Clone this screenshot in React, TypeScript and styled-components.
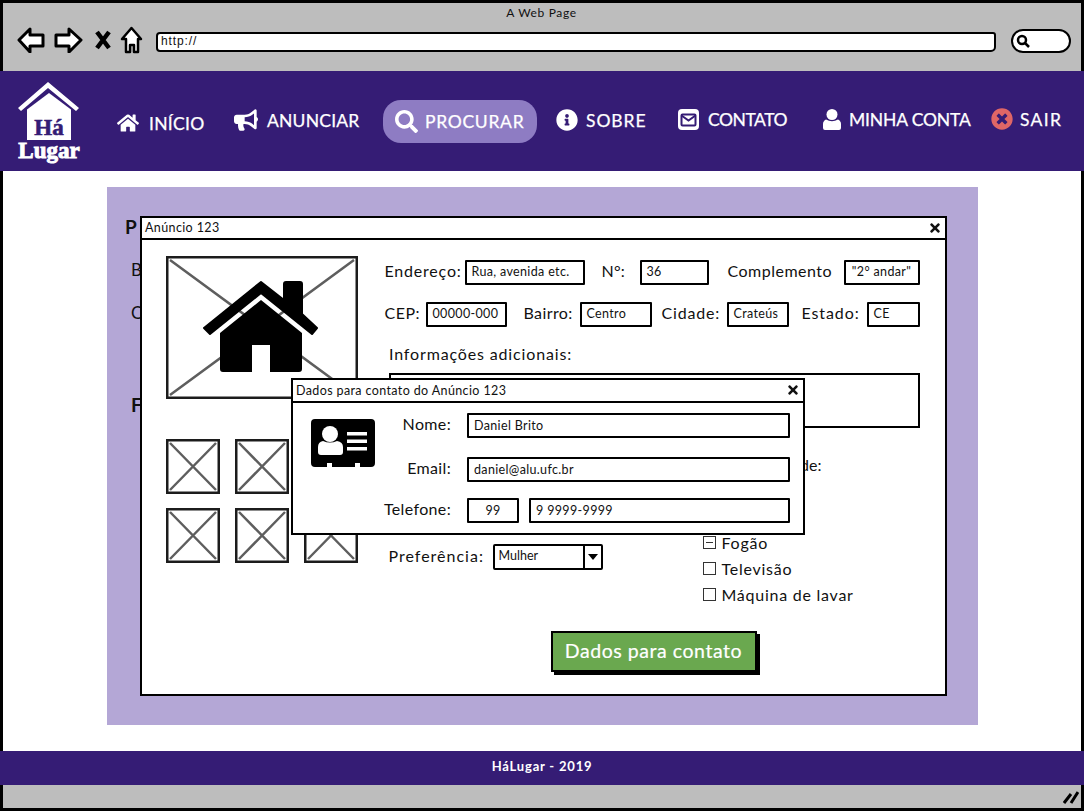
import React from "react";
import styled, { createGlobalStyle } from "styled-components";
import { FaHome, FaBullhorn, FaSearch, FaInfoCircle, FaTimesCircle, FaTimes } from "react-icons/fa";

const Global = createGlobalStyle`
  html, body { margin: 0; padding: 0; background: #fff; }
  * { box-sizing: border-box; }
  body { font-family: "Lato", "Noto Sans", sans-serif; color: #111; }
`;

const Page = styled.div`
  width: 1084px;
  height: 812px;
  display: flex;
  flex-direction: column;
  overflow: hidden;
  background: #fff;
`;

const Chrome = styled.header`
  height: 71px;
  background: #bdbdbd;
  border: 3px solid #000;
  border-bottom: 0;
  display: flex;
  flex-direction: column;
  padding: 2px 10px 0 14px;
`;
const ChromeTitle = styled.div`
  height: 16px;
  font-size: 12px;
  line-height: 15px;
  text-align: center;
  letter-spacing: 0.65px;
  padding-right: 5px;
`;
const ChromeBar = styled.div`
  display: flex;
  align-items: center;
  height: 34px;
  margin-top: 2px;
`;
const ToolIcon = styled.svg<{ $ml?: number }>`
  flex: none;
  margin-left: ${(p) => p.$ml ?? 0}px;
`;
const UrlBar = styled.div`
  width: 842px;
  height: 20px;
  margin-left: 13px;
  margin-top: 3px;
  background: #fff;
  border: 2.5px solid #000;
  border-radius: 4px 3px 5px 4px;
  font-size: 12px;
  line-height: 15px;
  padding-left: 3px;
  font-family: "Liberation Sans", sans-serif;
  letter-spacing: 0.9px;
`;
const SearchPill = styled.div`
  width: 60px;
  height: 24px;
  margin-left: 15px;
  margin-top: 1px;
  background: #fff;
  border: 2.5px solid #000;
  border-radius: 12px;
  display: flex;
  align-items: center;
  padding-left: 3px;
`;

const Nav = styled.nav`
  height: 100px;
  background: #351c75;
  display: flex;
  align-items: center;
  padding-left: 18px;
  color: #fff;
  flex: none;
`;
const Logo = styled.div`
  width: 62px;
  height: 79px;
  position: relative;
  flex: none;
`;
const LogoHa = styled.span`
  position: absolute;
  left: 0;
  right: 0;
  top: 34px;
  text-align: center;
  font: 700 23px/24px "Liberation Serif", serif;
  color: #351c75;
  -webkit-text-stroke: 0.6px #351c75;
`;
const LogoLugar = styled.span`
  position: absolute;
  left: -2px;
  right: -2px;
  top: 58px;
  text-align: center;
  font: 700 23px/22px "Liberation Serif", serif;
  color: #fff;
  -webkit-text-stroke: 0.9px #fff;
`;
const NavItem = styled.a<{ $w: number; $ml: number; $shift: number; $active?: boolean }>`
  flex: none;
  width: ${(p) => p.$w}px;
  margin-left: ${(p) => p.$ml}px;
  margin-top: ${(p) => p.$shift * 2}px;
  display: flex;
  align-items: center;
  white-space: nowrap;
  font-size: 17.5px;
  color: #fff;
  -webkit-text-stroke: 0.25px #fff;
  ${(p) =>
    p.$active
      ? `background:#8e7cc3;border-radius:18px;height:43px;padding-left:12px;`
      : ""}
  svg { flex: none; }
`;
const NavText = styled.span<{ $gap: number; $ls: number }>`
  margin-left: ${(p) => p.$gap}px;
  letter-spacing: ${(p) => p.$ls}px;
`;

const Content = styled.main`
  flex: 1;
  min-height: 0;
  border: 3px solid #000;
  border-width: 0 3px;
  padding: 16px 0 26px 104px;
  display: flex;
`;
const Panel = styled.section`
  width: 871px;
  background: #b4a7d6;
  position: relative;
  padding: 30px 0 0 18px;
`;
const PanelLetter = styled.div<{ $top: number; $bold?: boolean; $indent?: number }>`
  height: 20px;
  margin-top: ${(p) => p.$top}px;
  margin-left: ${(p) => p.$indent ?? 0}px;
  font-size: ${(p) => (p.$bold ? 19 : 17)}px;
  line-height: 20px;
  font-weight: ${(p) => (p.$bold ? 700 : 400)};
`;

const Win = styled.div`
  position: absolute;
  background: #fff;
  border: 2.5px solid #000;
`;
const MainWin = styled(Win)`
  left: 33px;
  top: 29px;
  width: 807px;
  height: 480px;
`;
const Dialog = styled(Win)`
  left: 184px;
  top: 191px;
  width: 514px;
  height: 157px;
  z-index: 2;
`;
const TitleBar = styled.div<{ $h: number }>`
  height: ${(p) => p.$h}px;
  border-bottom: 2.5px solid #000;
  display: flex;
  align-items: center;
  justify-content: space-between;
  padding: 0 3px 1px 3px;
  font-size: 12.5px;
  letter-spacing: 0.38px;
`;
const WinBody = styled.div`
  display: grid;
  grid-template-columns: 192px 535px;
  column-gap: 27px;
  padding: 15.500px 0 0 23.500px;
`;
const LeftCol = styled.div`
  display: flex;
  flex-direction: column;
`;
const ThumbGrid = styled.div`
  display: grid;
  grid-template-columns: repeat(3, 54px);
  grid-auto-rows: 55px;
  column-gap: 15px;
  row-gap: 14px;
  margin-top: 40px;
`;
const RightCol = styled.div`
  padding-top: 4px;
`;
const FormRow = styled.div<{ $top?: number }>`
  display: flex;
  align-items: center;
  height: 25px;
  margin-top: ${(p) => p.$top ?? 0}px;
`;
const Label = styled.span<{ $w: number; $ml?: number; $ls?: number }>`
  flex: none;
  width: ${(p) => p.$w}px;
  margin-left: ${(p) => p.$ml ?? 0}px;
  margin-top: -4px;
  font-size: 16px;
  white-space: nowrap;
  letter-spacing: ${(p) => p.$ls ?? 0.5}px;
`;
const Field = styled.div<{ $w: number; $ml?: number; $center?: boolean }>`
  flex: none;
  width: ${(p) => p.$w}px;
  margin-left: ${(p) => p.$ml ?? 0}px;
  height: 25px;
  border: 2.5px solid #000;
  border-radius: 1px;
  background: #fff;
  display: flex;
  align-items: center;
  justify-content: ${(p) => (p.$center ? "center" : "flex-start")};
  padding: 0 ${(p) => (p.$center ? 0 : 5)}px 1px;
  font-size: 12.5px;
  letter-spacing: 0.35px;
  white-space: nowrap;
`;
const InfoLabel = styled.div`
  margin: 17px 0 0 4.500px;
  height: 20px;
  line-height: 20px;
  font-size: 16px;
  letter-spacing: 0.85px;
`;
const TextBox = styled.div`
  margin: 9px 0 0 4px;
  height: 55px;
  border: 2.5px solid #000;
  background: #fff;
`;
const Lower = styled.div`
  display: flex;
`;
const PrefCol = styled.div`
  width: 318px;
  padding: 117px 0 0 4px;
`;
const Select = styled.div`
  flex: none;
  width: 110px;
  height: 26px;
  margin-left: 4px;
  border: 2px solid #000;
  border-radius: 2px;
  display: flex;
  align-items: stretch;
  font-size: 12.5px;
`;
const SelectValue = styled.span`
  flex: 1;
  padding-left: 4px;
  line-height: 19px;
`;
const SelectArrow = styled.span`
  width: 18px;
  border-left: 2px solid #000;
  display: flex;
  align-items: center;
  justify-content: center;
  &::after {
    content: "";
    border-left: 5px solid transparent;
    border-right: 5px solid transparent;
    border-top: 6px solid #000;
  }
`;
const FeatureCol = styled.div`
  padding-top: 27px;
`;
const FeatureTitle = styled.div`
  width: 119px;
  height: 20px;
  line-height: 20px;
  font-size: 16px;
  text-align: right;
  margin-bottom: 55px;
  white-space: nowrap;
`;
const Feature = styled.div`
  height: 26px;
  display: flex;
  align-items: center;
  font-size: 16px;
  letter-spacing: 0.75px;
`;
const Check = styled.span<{ $mixed?: boolean }>`
  width: 13px;
  height: 13px;
  border: 1.5px solid #333;
  margin-right: 6px;
  display: flex;
  align-items: center;
  justify-content: center;
  &::after {
    content: "";
    display: ${(p) => (p.$mixed ? "block" : "none")};
    width: 7px;
    height: 1.5px;
    background: #333;
  }
`;
const ContactButton = styled.div`
  width: 206px;
  height: 41px;
  margin: 23px 0 0 166px;
  background: #6aa84f;
  border: 2px solid #000;
  box-shadow: 3px 3px 0 #000;
  color: #fff;
  font-size: 19.500px;
  letter-spacing: 0.55px;
  -webkit-text-stroke: 0.2px #fff;
  padding-bottom: 2px;
  display: flex;
  align-items: center;
  justify-content: center;
`;

const DialogBody = styled.div`
  display: flex;
  padding: 10px 0 0 18px;
`;
const CardIcon = styled.svg`
  flex: none;
  margin-top: 6px;
`;
const DialogForm = styled.div``;
const DialogLabel = styled.span`
  width: 76px;
  flex: none;
  text-align: right;
  font-size: 16px;
  margin-right: 16px;
  margin-top: -5px;
  letter-spacing: 0.35px;
`;

const FooterBar = styled.footer`
  height: 34px;
  background: #351c75;
  color: #fff;
  flex: none;
  display: flex;
  align-items: center;
  justify-content: center;
  font-size: 13px;
  letter-spacing: 0.8px;
  font-weight: 700;
  padding-bottom: 5px;
`;
const BottomChrome = styled.div`
  height: 26px;
  flex: none;
  margin-bottom: 1px;
  background: #bdbdbd;
  border: 3px solid #000;
  border-top: 0;
  display: flex;
  justify-content: flex-end;
  align-items: center;
  padding-right: 2px;
`;

const Placeholder = ({ w, h, house }: { w: number; h: number; house?: boolean }) => (
  <svg width={w} height={h} viewBox={`0 0 ${w} ${h}`} style={{ display: "block" }}>
    <rect x="1.25" y="1.25" width={w - 2.5} height={h - 2.5} fill="#fff" stroke="#1c1c1c" strokeWidth="2.5" />
    <path d={`M4 4L${w - 4} ${h - 4}M${w - 4} 4L4 ${h - 4}`} stroke="#5e5e5e" strokeWidth="2.5" />
    {house && (
      <g fill="#000">
        <path d="M95 26L118 44V28q0-2 2-2h14q2 0 2 2V58L151 72l-5 6L95 37 44 78l-6-6z" stroke="#000" strokeWidth="2" strokeLinejoin="round" />
        <path d="M95 44l41 33v36q0 3-3 3h-29V89H86v27H57q-3 0-3-3V77z" />
      </g>
    )}
  </svg>
);

const LogoHouse = () => (
  <svg width="62" height="60" viewBox="0 0 62 60" style={{ display: "block" }}>
    <path d="M9 27.500V58h44V27.500L31 11z" fill="#fff" />
    <path d="M0 26L30 0 61 26l-3 3L30 6 3 29z" fill="#fff" />
  </svg>
);

const MailIcon = () => (
  <svg width="21" height="21" viewBox="0 0 21 21">
    <rect width="21" height="21" rx="4" fill="#fff" />
    <rect x="3.500" y="5.500" width="14" height="11" rx="1" fill="none" stroke="#351c75" strokeWidth="2" />
    <path d="M3.500 6.500l7 5 7-5" fill="none" stroke="#351c75" strokeWidth="2" />
  </svg>
);

const UserIcon = () => (
  <svg width="18" height="21" viewBox="0 0 18 21">
    <circle cx="9" cy="5.500" r="5.500" fill="#fff" />
    <path d="M0 19v-4q0-3 3-4.500 6 3.500 12 0 3 1.500 3 4.500v4q0 2-2 2H2q-2 0-2-2z" fill="#fff" />
  </svg>
);

const Card = () => (
  <CardIcon width="64" height="48" viewBox="0 0 64 48">
    <path d="M4 0h56q4 0 4 4v40q0 4-4 4H49v-4h-5v4H21v-4h-5v4H4q-4 0-4-4V4q0-4 4-4z" fill="#000" />
    <circle cx="19" cy="15" r="8" fill="#fff" />
    <path d="M7 33v-5q0-5 5-6 7 3 14 0 6 1 6 6v5q0 3-3 3H10q-3 0-3-3z" fill="#fff" />
    <path d="M36 13h20v3.500H36zM36 20.500h20V24H36zM36 28h20v3.500H36z" fill="#fff" />
  </CardIcon>
);

export default function App() {
  return (
    <Page>
      <Global />
      <Chrome>
        <ChromeTitle>A Web Page</ChromeTitle>
        <ChromeBar>
          <ToolIcon width="28" height="26" viewBox="0 0 28 26">
            <path d="M2 13L13 2v6h13v11H13v6z" fill="#fff" stroke="#000" strokeWidth="3" strokeLinejoin="round" />
          </ToolIcon>
          <ToolIcon $ml={9} width="29" height="26" viewBox="0 0 29 26">
            <path d="M27 13L15 2v6H2v11h13v6z" fill="#fff" stroke="#000" strokeWidth="3" strokeLinejoin="round" />
          </ToolIcon>
          <ToolIcon $ml={12} width="16" height="20" viewBox="0 0 16 20">
            <path d="M2 2l12 16M14 2L2 18" stroke="#000" strokeWidth="4.500" fill="none" />
          </ToolIcon>
          <ToolIcon $ml={9} width="23" height="28" viewBox="0 0 23 28">
            <path d="M11.500 2L2 13h4v13h4v-7h4v7h4V13h3z" fill="#fff" stroke="#000" strokeWidth="2.500" strokeLinejoin="round" />
          </ToolIcon>
          <UrlBar>http://</UrlBar>
          <SearchPill>
            <svg width="14" height="14" viewBox="0 0 14 14">
              <circle cx="6" cy="6" r="4" fill="none" stroke="#000" strokeWidth="2.500" />
              <path d="M9 9l4 4" stroke="#000" strokeWidth="2.500" />
            </svg>
          </SearchPill>
        </ChromeBar>
      </Chrome>

      <Nav>
        <Logo>
          <LogoHouse />
          <LogoHa>Há</LogoHa>
          <LogoLugar>Lugar</LogoLugar>
        </Logo>
        <NavItem $w={87} $ml={37} $shift={2}>
          <FaHome size={22} />
          <NavText $gap={10} $ls={0.3}>INÍCIO</NavText>
        </NavItem>
        <NavItem $w={125} $ml={30} $shift={-1}>
          <FaBullhorn size={24} />
          <NavText $gap={9} $ls={0.2}>ANUNCIAR</NavText>
        </NavItem>
        <NavItem $w={154} $ml={24} $shift={0} $active>
          <FaSearch size={23} />
          <NavText $gap={7} $ls={0.7}>PROCURAR</NavText>
        </NavItem>
        <NavItem $w={90} $ml={19} $shift={-1}>
          <FaInfoCircle size={22} />
          <NavText $gap={8} $ls={0.9}>SOBRE</NavText>
        </NavItem>
        <NavItem $w={109} $ml={32} $shift={-2}>
          <MailIcon />
          <NavText $gap={9} $ls={-0.45}>CONTATO</NavText>
        </NavItem>
        <NavItem $w={148} $ml={36} $shift={-2}>
          <UserIcon />
          <NavText $gap={8} $ls={-0.15}>MINHA CONTA</NavText>
        </NavItem>
        <NavItem $w={71} $ml={20} $shift={-2}>
          <FaTimesCircle size={22} color="#e06666" />
          <NavText $gap={7} $ls={1.3}>SAIR</NavText>
        </NavItem>
      </Nav>

      <Content>
        <Panel>
          <PanelLetter $top={0} $bold>P</PanelLetter>
          <PanelLetter $top={23} $indent={6}>B</PanelLetter>
          <PanelLetter $top={23} $indent={6}>C</PanelLetter>
          <PanelLetter $top={72} $bold $indent={6}>F</PanelLetter>

          <MainWin>
            <TitleBar $h={22}>
              <span>Anúncio 123</span>
              <FaTimes size={14} />
            </TitleBar>
            <WinBody>
              <LeftCol>
                <Placeholder w={192} h={143} house />
                <ThumbGrid>
                  {[0, 1, 2, 3, 4, 5].map((i) => (
                    <Placeholder key={i} w={54} h={55} />
                  ))}
                </ThumbGrid>
              </LeftCol>
              <RightCol>
                <FormRow>
                  <Label $w={80} $ls={0.8}>Endereço:</Label>
                  <Field $w={120}>Rua, avenida etc.</Field>
                  <Label $w={38} $ml={17} $ls={0.2}>N°:</Label>
                  <Field $w={69}>36</Field>
                  <Label $w={116} $ml={19}>Complemento</Label>
                  <Field $w={76} $center>"2° andar"</Field>
                </FormRow>
                <FormRow $top={17}>
                  <Label $w={41}>CEP:</Label>
                  <Field $w={81}>00000-000</Field>
                  <Label $w={56} $ml={17} $ls={0.4}>Bairro:</Label>
                  <Field $w={72}>Centro</Field>
                  <Label $w={65} $ml={10} $ls={0.8}>Cidade:</Label>
                  <Field $w={62}>Crateús</Field>
                  <Label $w={65} $ml={13} $ls={0.9}>Estado:</Label>
                  <Field $w={53}>CE</Field>
                </FormRow>
                <InfoLabel>Informações adicionais:</InfoLabel>
                <TextBox />
                <Lower>
                  <PrefCol>
                    <FormRow>
                      <Label $w={100} $ls={1}>Preferência:</Label>
                      <Select>
                        <SelectValue>Mulher</SelectValue>
                        <SelectArrow />
                      </Select>
                    </FormRow>
                  </PrefCol>
                  <FeatureCol>
                    <FeatureTitle>Comodidade:</FeatureTitle>
                    <Feature><Check $mixed />Fogão</Feature>
                    <Feature><Check />Televisão</Feature>
                    <Feature><Check />Máquina de lavar</Feature>
                  </FeatureCol>
                </Lower>
                <ContactButton>Dados para contato</ContactButton>
              </RightCol>
            </WinBody>
          </MainWin>

          <Dialog>
            <TitleBar $h={23}>
              <span>Dados para contato do Anúncio 123</span>
              <FaTimes size={14} />
            </TitleBar>
            <DialogBody>
              <Card />
              <DialogForm>
                <FormRow>
                  <DialogLabel>Nome:</DialogLabel>
                  <Field $w={323}>Daniel Brito</Field>
                </FormRow>
                <FormRow $top={19}>
                  <DialogLabel>Email:</DialogLabel>
                  <Field $w={323}>daniel@alu.ufc.br</Field>
                </FormRow>
                <FormRow $top={16}>
                  <DialogLabel>Telefone:</DialogLabel>
                  <Field $w={52} $center>99</Field>
                  <Field $w={261} $ml={10}>9 9999-9999</Field>
                </FormRow>
              </DialogForm>
            </DialogBody>
          </Dialog>
        </Panel>
      </Content>

      <FooterBar>HáLugar - 2019</FooterBar>
      <BottomChrome>
        <svg width="16" height="14" viewBox="0 0 16 14">
          <path d="M1 13L8 4M8 13L15 2" stroke="#000" strokeWidth="3" />
        </svg>
      </BottomChrome>
    </Page>
  );
}
